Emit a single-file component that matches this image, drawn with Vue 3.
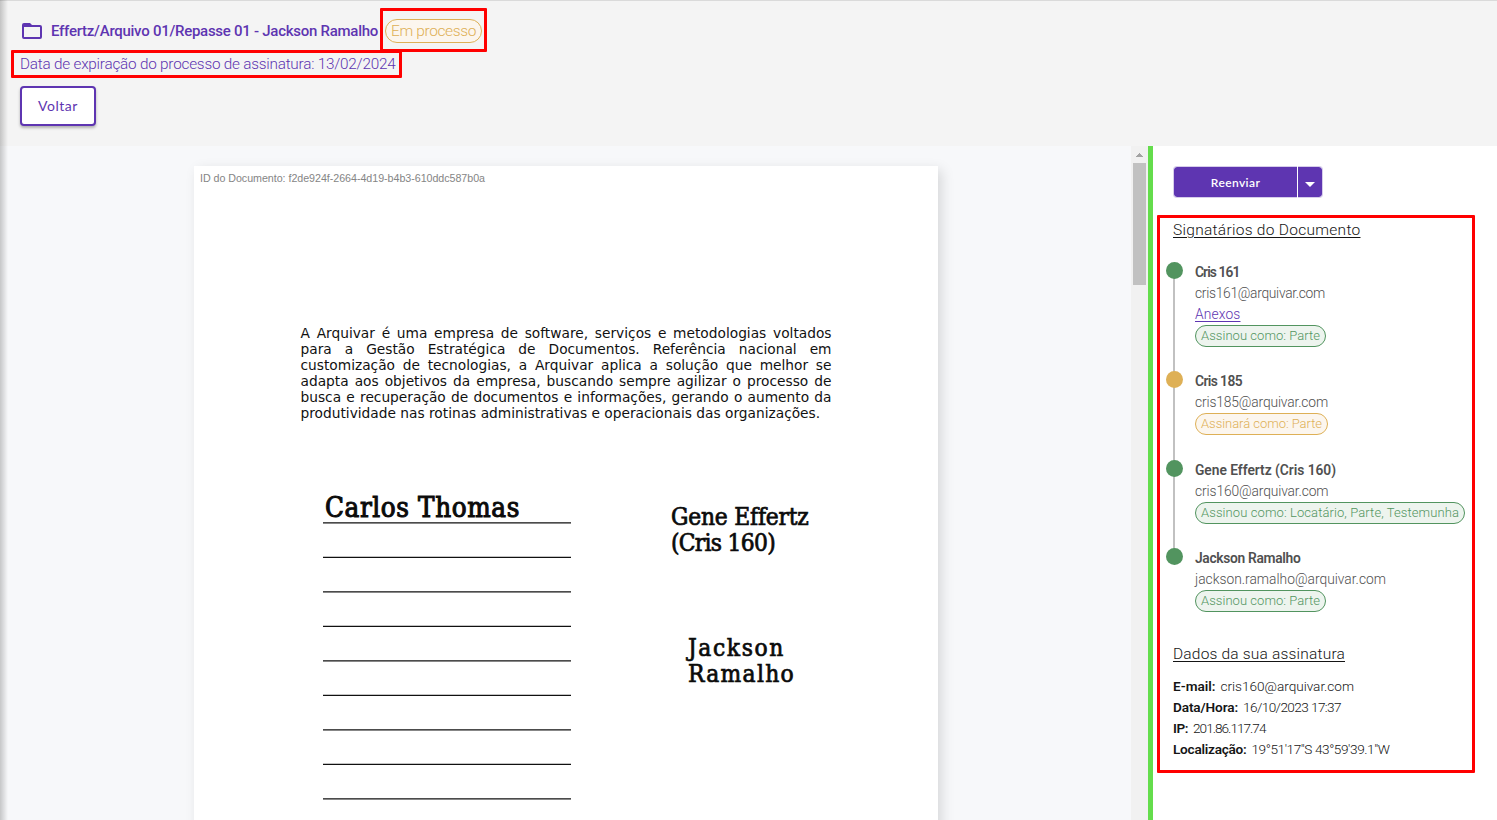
<script setup>
// Spreads a line's letters so that it takes exactly the given width.
const vFit = {
  mounted(el, { value }) {
    const natural = el.getBoundingClientRect().width
    const count = Array.from(el.textContent).length
    el.style.letterSpacing = `${(value - natural) / count}px`
  },
}

const paragraph = [
  'A Arquivar é uma empresa de software, serviços e metodologias voltados',
  'para a Gestão Estratégica de Documentos. Referência nacional em',
  'customização de tecnologias, a Arquivar aplica a solução que melhor se',
  'adapta aos objetivos da empresa, buscando sempre agilizar o processo de',
  'busca e recuperação de documentos e informações, gerando o aumento da',
  'produtividade nas rotinas administrativas e operacionais das organizações.',
]

const rules = Array.from({ length: 9 }, (_, i) => 0.9 + i * 34.5)

const signers = [
  { name: 'Cris 161', nameW: 44.5, email: 'cris161@arquivar.com', emailW: 130, attach: true, role: 'Assinou como: Parte', roleW: 119, state: 'done' },
  { name: 'Cris 185', nameW: 47, email: 'cris185@arquivar.com', emailW: 133, role: 'Assinará como: Parte', roleW: 121, state: 'pending' },
  { name: 'Gene Effertz (Cris 160)', nameW: 141, email: 'cris160@arquivar.com', emailW: 133.5, role: 'Assinou como: Locatário, Parte, Testemunha', roleW: 258, state: 'done' },
  { name: 'Jackson Ramalho', nameW: 105.5, email: 'jackson.ramalho@arquivar.com', emailW: 191, role: 'Assinou como: Parte', roleW: 119, state: 'done' },
]

const details = [
  { label: 'E-mail:', labelW: 42.5, value: 'cris160@arquivar.com', valueW: 133.5 },
  { label: 'Data/Hora:', labelW: 65, value: '16/10/2023 17:37', valueW: 98 },
  { label: 'IP:', labelW: 15, value: '201.86.117.74', valueW: 72.5 },
  { label: 'Localização:', labelW: 73.5, value: '19°51\'17"S 43°59\'39.1"W', valueW: 138 },
]
</script>

<template>
  <div class="app">
    <header class="header">
      <div class="title-row">
        <svg class="folder" width="20" height="16" viewBox="0 0 20 16">
          <path d="M2 0h6l2 2h8a2 2 0 0 1 2 2v10a2 2 0 0 1-2 2H2a2 2 0 0 1-2-2V2a2 2 0 0 1 2-2zM2 4v10h16V4z" fill="#5e35b1" fill-rule="evenodd" />
        </svg>
        <h1 class="title"><span v-fit="327">Effertz/Arquivo 01/Repasse 01 - Jackson Ramalho</span></h1>
        <span class="status"><span v-fit="85">Em processo</span></span>
      </div>
      <p class="expiry"><span v-fit="375.5">Data de expiração do processo de assinatura: 13/02/2024</span></p>
      <button class="back"><span v-fit="40">Voltar</span></button>
    </header>

    <main class="main">
      <section class="viewer">
        <article class="page">
          <p class="doc-id"><span v-fit="285">ID do Documento: f2de924f-2664-4d19-b4b3-610ddc587b0a</span></p>
          <div class="paragraph">
            <p v-for="line in paragraph" :key="line">{{ line }}</p>
          </div>
          <div class="signatures">
            <div class="column">
              <p class="signed"><span v-fit="195">Carlos Thomas</span></p>
              <svg width="248" height="280" viewBox="0 0 248 280">
                <line v-for="y in rules" :key="y" x1="0" x2="248" :y1="y" :y2="y" stroke="#111" stroke-width="1.3" />
              </svg>
            </div>
            <div class="stamps">
              <p class="stamp"><span v-fit="137">Gene Effertz</span><span v-fit="104">(Cris 160)</span></p>
              <p class="stamp second"><span v-fit="97">Jackson</span><span v-fit="107">Ramalho</span></p>
            </div>
          </div>
        </article>
      </section>

      <div class="scrollbar">
        <svg width="7" height="4" viewBox="0 0 7 4"><path d="M0 4V3h1V2h1V1h1V0h1v1h1v1h1v1h1v1z" fill="#a3a3a3" /></svg>
        <div class="thumb"></div>
      </div>

      <aside class="panel">
        <div class="resend">
          <button class="resend-main"><span v-fit="49.5">Reenviar</span></button>
          <button class="resend-more" aria-label="Mais opções">
            <svg width="10" height="5" viewBox="0 0 10 5"><path d="M0 0h10L5 5z" fill="#fff" /></svg>
          </button>
        </div>

        <h2 class="heading"><span v-fit="187.5">Signatários do Documento</span></h2>
        <ul class="timeline">
          <li v-for="s in signers" :key="s.name" class="signer" :class="s.state">
            <div class="row name"><span v-fit="s.nameW">{{ s.name }}</span></div>
            <div class="row"><span v-fit="s.emailW">{{ s.email }}</span></div>
            <div v-if="s.attach" class="row"><a class="attach"><span v-fit="45.5">Anexos</span></a></div>
            <div class="role"><span v-fit="s.roleW">{{ s.role }}</span></div>
          </li>
        </ul>

        <h2 class="heading own"><span v-fit="172">Dados da sua assinatura</span></h2>
        <div v-for="d in details" :key="d.label" class="detail">
          <b><span v-fit="d.labelW">{{ d.label }}</span></b>
          <span v-fit="d.valueW">{{ d.value }}</span>
        </div>
      </aside>
    </main>

    <div class="mark mark-status"></div>
    <div class="mark mark-expiry"></div>
    <div class="mark mark-panel"></div>
    <div class="edge"></div>
  </div>
</template>

<style>
body { margin: 0; overflow: hidden; }
</style>

<style scoped>
.app {
  position: relative;
  display: flex;
  flex-direction: column;
  width: 1497px;
  height: 820px;
  overflow: hidden;
  font-family: Roboto, "Noto Sans", sans-serif;
  font-weight: 300;
  white-space: nowrap;
}
p, h1, h2, ul { margin: 0; padding: 0; font-weight: inherit; }
button { box-sizing: border-box; padding: 0; border: 0; font-family: Lato, sans-serif; }
.header {
  box-sizing: border-box;
  flex: none;
  height: 146px;
  padding: 18px 20px 0;
  border-top: 1px solid #dadada;
  background: #f4f4f4;
  color: #5e35b1;
}
.title-row { display: flex; align-items: center; height: 24px; }
.folder { margin: 0 9px 0 2px; }
.title { width: 327px; font-size: 15px; font-weight: 500; }
.status {
  box-sizing: border-box;
  width: 97px;
  height: 24px;
  margin-left: 7px;
  padding-left: 5px;
  border: 1px solid #deb056;
  border-radius: 12px;
  background: #fcf6ee;
  color: #deb056;
  font-size: 15.5px;
  line-height: 22px;
}
.expiry { height: 22px; margin-top: 10px; font-size: 15.3px; line-height: 23px; }
.back {
  display: block;
  width: 76px;
  height: 40px;
  margin-top: 11px;
  padding-bottom: 1px;
  border: 2px solid #5e35b1;
  border-radius: 4px;
  background: #fff;
  box-shadow: 0 2px 3px rgba(0, 0, 0, .28);
  color: #5e35b1;
  font-size: 14px;
}
.main { display: flex; flex: 1; min-height: 0; }
.viewer {
  box-sizing: border-box;
  width: 1131px;
  padding: 20px 0 0 194px;
  overflow: hidden;
  background: #f7f8fa;
}
.page {
  box-sizing: border-box;
  width: 744px;
  height: 700px;
  padding-top: 4px;
  background: #fff;
  box-shadow: 4px 4px 12px rgba(0, 0, 0, .13);
}
.doc-id {
  padding-left: 6px;
  color: #858585;
  font: 10.7px/16px "Liberation Sans", sans-serif;
}
.paragraph {
  width: 531px;
  margin: 139px 0 0 106.5px;
  color: #111;
  font: 13.75px/16px "DejaVu Sans", sans-serif;
}
.paragraph p { height: 16px; text-align: justify; text-align-last: justify; white-space: normal; }
.paragraph p:last-child { text-align-last: left; white-space: nowrap; }
.signatures {
  display: flex;
  gap: 100px;
  margin: 69px 0 0 129px;
  color: #0b0b0b;
  font-family: "DejaVu Serif Condensed", "DejaVu Serif", serif;
  font-weight: 400;
}
.column { width: 248px; }
.column svg { display: block; }
.signed { height: 32px; padding-left: 2px; font-size: 27.5px; line-height: 34px; -webkit-text-stroke: 1px #0b0b0b; }
.stamps { padding-top: 14px; }
.stamp { height: 52px; font-size: 24.3px; line-height: 25.5px; -webkit-text-stroke: .7px #0b0b0b; }
.stamp span { display: block; width: fit-content; }
.stamp.second { margin: 79px 0 0 17px; }
.scrollbar {
  display: flex;
  flex-direction: column;
  align-items: center;
  box-sizing: border-box;
  width: 17px;
  padding-top: 7px;
  background: #f1f1f1;
}
.thumb { width: 13px; height: 122px; margin-top: 6px; background: #c1c1c1; }
.panel {
  box-sizing: border-box;
  width: 349px;
  padding: 20px 0 0 20px;
  border-left: 5px solid #64dd4c;
  background: #fff;
  color: #151515;
}
.resend {
  display: flex;
  gap: 1px;
  width: 150px;
  height: 32px;
}
.resend button {
  height: 32px;
  border: 1px solid #d6cdea;
  background: #5e35b1;
  background-clip: padding-box;
  color: #fff;
  font-size: 12px;
  font-weight: 600;
}
.resend .resend-main { width: 124px; padding-top: 1px; border-right: 0; border-radius: 4px 0 0 4px; }
.resend .resend-more {
  display: flex;
  align-items: center;
  justify-content: center;
  width: 25px;
  padding-top: 4px;
  border-left: 0;
  border-radius: 0 4px 4px 0;
}
.heading { height: 24px; margin-top: 20px; font-size: 15.5px; line-height: 24px; }
.heading span { text-decoration: underline; text-underline-offset: 2px; }
.timeline { margin-top: 19px; list-style: none; color: #505050; }
.signer { position: relative; height: 88.5px; padding-left: 22px; font-size: 13.8px; }
.signer:first-child { height: 109px; }
.signer:last-child { height: 63px; }
.signer::before {
  content: "";
  position: absolute;
  top: 9px;
  bottom: -9px;
  left: 0;
  width: 2px;
  background: #c1c1c1;
}
.signer:last-child::before { display: none; }
.signer::after {
  content: "";
  position: absolute;
  top: 1px;
  left: -7px;
  width: 17px;
  height: 17px;
  border-radius: 50%;
  background: #52945f;
}
.signer.pending::after { background: #deb056; }
.row { height: 21px; line-height: 22px; }
.name { font-weight: 600; }
.attach { color: #5e35b1; }
.attach span { text-decoration: underline; text-underline-offset: 2px; }
.role {
  box-sizing: border-box;
  width: fit-content;
  height: 22px;
  margin-top: 1px;
  padding: 0 5px;
  border: 1px solid #52945f;
  border-radius: 11px;
  background: #edf4ee;
  color: #52945f;
  font-size: 13px;
  line-height: 20px;
}
.pending .role { border-color: #deb056; background: #fcf6ee; color: #deb056; }
.own { margin-top: 32px; margin-bottom: 10px; }
.detail { display: flex; gap: 5px; height: 21px; font-size: 13.6px; line-height: 21px; }
.detail b { font-weight: 600; }
.mark { position: absolute; box-sizing: border-box; border: 3px solid #f00; border-radius: 1px; }
.mark-status { left: 380px; top: 8px; width: 107px; height: 44px; }
.mark-expiry { left: 11px; top: 50px; width: 391px; height: 28px; }
.mark-panel { left: 1157px; top: 215px; width: 318px; height: 558px; }
.edge {
  position: absolute;
  inset: 0 auto 0 0;
  width: 8px;
  background: linear-gradient(to right, rgba(0, 0, 0, .2), transparent);
}
</style>
